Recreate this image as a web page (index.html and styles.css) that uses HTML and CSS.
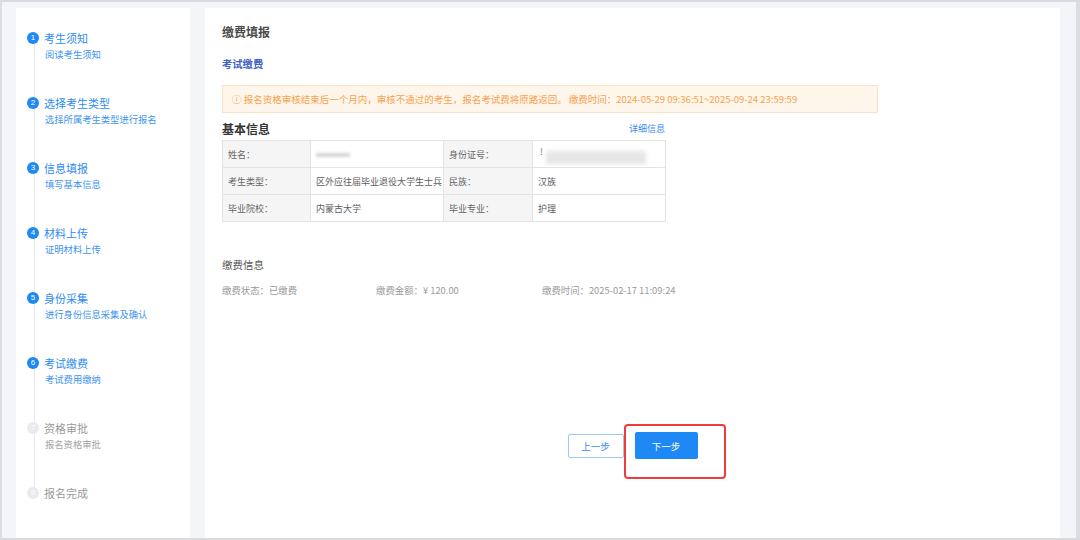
FILE: index.html
```html
<!DOCTYPE html>
<html lang="zh">
<head>
<meta charset="utf-8">
<title>缴费填报</title>
<link rel="stylesheet" href="styles.css">
</head>
<body>
<div class="frame">
  <aside class="sidebar">
    <div class="step done">
      <div class="rail"><span class="dot">1</span><span class="line"></span></div>
      <div class="txt"><div class="st">考生须知</div><div class="sd">阅读考生须知</div></div>
    </div>
    <div class="step done">
      <div class="rail"><span class="dot">2</span><span class="line"></span></div>
      <div class="txt"><div class="st">选择考生类型</div><div class="sd">选择所属考生类型进行报名</div></div>
    </div>
    <div class="step done">
      <div class="rail"><span class="dot">3</span><span class="line"></span></div>
      <div class="txt"><div class="st">信息填报</div><div class="sd">填写基本信息</div></div>
    </div>
    <div class="step done">
      <div class="rail"><span class="dot">4</span><span class="line"></span></div>
      <div class="txt"><div class="st">材料上传</div><div class="sd">证明材料上传</div></div>
    </div>
    <div class="step done">
      <div class="rail"><span class="dot">5</span><span class="line"></span></div>
      <div class="txt"><div class="st">身份采集</div><div class="sd">进行身份信息采集及确认</div></div>
    </div>
    <div class="step done">
      <div class="rail"><span class="dot">6</span><span class="line"></span></div>
      <div class="txt"><div class="st">考试缴费</div><div class="sd">考试费用缴纳</div></div>
    </div>
    <div class="step todo">
      <div class="rail"><span class="dot">7</span><span class="line"></span></div>
      <div class="txt"><div class="st">资格审批</div><div class="sd">报名资格审批</div></div>
    </div>
    <div class="step todo last">
      <div class="rail"><span class="dot">8</span></div>
      <div class="txt"><div class="st">报名完成</div></div>
    </div>
  </aside>

  <main class="main">
    <h1 class="page-title">缴费填报</h1>
    <h2 class="sub-title">考试缴费</h2>
    <div class="alert">ⓘ 报名资格审核结束后一个月内，审核不通过的考生，报名考试费将原路返回。 缴费时间：2024-05-29 09:36:51~2025-09-24 23:59:59</div>

    <div class="info-head">
      <span class="info-title">基本信息</span>
      <span class="info-link">详细信息</span>
    </div>
    <table class="info-table">
      <tr>
        <td class="lb">姓名：</td>
        <td class="val"><span class="blur-name"></span></td>
        <td class="lb">身份证号：</td>
        <td class="val"><span class="id-mark">!</span><span class="blur-id"></span></td>
      </tr>
      <tr>
        <td class="lb">考生类型：</td>
        <td class="val">区外应往届毕业退役大学生士兵</td>
        <td class="lb">民族：</td>
        <td class="val">汉族</td>
      </tr>
      <tr>
        <td class="lb">毕业院校：</td>
        <td class="val">内蒙古大学</td>
        <td class="lb">毕业专业：</td>
        <td class="val">护理</td>
      </tr>
    </table>

    <div class="pay-title">缴费信息</div>
    <div class="pay-row">
      <span>缴费状态：已缴费</span>
      <span>缴费金额：¥ 120.00</span>
      <span>缴费时间：2025-02-17 11:09:24</span>
    </div>

    <div class="actions">
      <button class="btn btn-prev">上一步</button>
      <div class="next-wrap">
        <button class="btn btn-next">下一步</button>
        <span class="highlight"></span>
      </div>
    </div>
  </main>
</div>
</body>
</html>
```
FILE: styles.css
```css
html, body {
  margin: 0;
  padding: 0;
}
body {
  font-family: "Noto Sans CJK SC", "Microsoft YaHei", "Liberation Sans", sans-serif;
  background: #ffffff;
}
.frame {
  width: 1080px;
  height: 540px;
  box-sizing: border-box;
  border-top: 2px solid #d9dadc;
  border-left: 2px solid #dcdde0;
  border-right: 4px solid #dcdde0;
  border-bottom: 2px solid #d9dadc;
  background: #f3f5f9;
  padding: 6px 16px 0 14px;
  display: flex;
  gap: 15px;
}

/* ---------- sidebar ---------- */
.sidebar {
  width: 174px;
  background: #ffffff;
  box-sizing: border-box;
  padding: 24px 0 0 11px;
}
.step {
  display: flex;
  height: 65px;
}
.step.last { height: auto; }
.rail {
  width: 12px;
  display: flex;
  flex-direction: column;
  align-items: center;
}
.dot {
  width: 12px;
  height: 12px;
  border-radius: 50%;
  background: #1e89f4;
  color: #fff;
  font-family: "Liberation Sans", sans-serif;
  font-size: 8px;
  line-height: 12px;
  text-align: center;
  flex: none;
}
.line {
  flex: 1;
  width: 1px;
  background: #e4e7ec;
  margin-left: 3px;
}
.txt {
  margin-left: 5px;
}
.st {
  font-size: 11px;
  line-height: 14px;
  color: #2f8cf0;
  margin-top: -1px;
}
.sd {
  font-size: 9.3px;
  line-height: 12px;
  color: #3d94f0;
  margin-top: 3px;
  margin-left: 1px;
}
.todo .dot {
  background: #e8eaee;
  color: #fff;
}
.todo .st { color: #9a9a9a; }
.todo .sd { color: #a3a3a3; }

/* ---------- main ---------- */
.main {
  flex: 1;
  background: #ffffff;
  box-sizing: border-box;
  padding: 16px 0 0 17px;
  display: flex;
  flex-direction: column;
  align-items: flex-start;
}
.page-title {
  margin: 0;
  font-size: 12px;
  line-height: 16px;
  font-weight: 700;
  color: #4a4a4a;
}
.sub-title {
  margin: 17px 0 0;
  font-size: 10.3px;
  line-height: 14px;
  font-weight: 700;
  color: #3f5fc9;
}
.alert {
  margin-top: 14px;
  width: 656px;
  height: 28px;
  box-sizing: border-box;
  background: #fff6eb;
  border: 1px solid #fbe2c5;
  color: #f5a250;
  font-size: 9.5px;
  line-height: 26px;
  padding-left: 9px;
  white-space: nowrap;
}
.info-head {
  margin-top: 7px;
  width: 443px;
  display: flex;
  justify-content: space-between;
  align-items: center;
  height: 16px;
}
.info-title {
  font-size: 12px;
  font-weight: 700;
  color: #333;
}
.info-link {
  font-size: 9px;
  color: #3d8bf0;
}
.info-table {
  margin-top: 4px;
  border-collapse: collapse;
  width: 443px;
  table-layout: fixed;
  font-size: 9px;
  color: #5c5c5c;
}
.info-table td {
  border: 1px solid #e3e3e3;
  height: 27px;
  padding: 0 0 0 5px;
  box-sizing: border-box;
  white-space: nowrap;
  overflow: hidden;
}
.info-table td:nth-child(1) { width: 88px; }
.info-table td:nth-child(2) { width: 133px; }
.info-table td:nth-child(3) { width: 89px; }
.info-table td:nth-child(4) { width: 133px; }
.info-table .lb {
  background: #f5f5f5;
  color: #666;
}
.blur-name {
  display: inline-block;
  width: 34px;
  height: 4px;
  background: #d4d4d4;
  filter: blur(1.5px);
  vertical-align: middle;
}
.id-mark {
  color: #777;
  margin-left: 2px;
}
.blur-id {
  display: inline-block;
  width: 100px;
  height: 13px;
  background: #e6e6e6;
  filter: blur(2px);
  vertical-align: -9px;
  margin-left: 3px;
}
.pay-title {
  margin-top: 36px;
  font-size: 10.5px;
  line-height: 14px;
  color: #555;
}
.pay-row {
  margin-top: 11px;
  display: grid;
  grid-template-columns: 154px 166px auto;
  font-size: 9.4px;
  line-height: 14px;
  color: #9a9a9a;
}
.actions {
  align-self: center;
  margin-top: 135px;
  margin-left: -17px;
  display: flex;
  align-items: center;
  gap: 11px;
}
.btn {
  font-family: "Noto Sans CJK SC", "Liberation Sans", sans-serif;
  font-size: 9.5px;
  border-radius: 2px;
  cursor: pointer;
  padding: 0;
}
.btn-prev {
  width: 56px;
  height: 24px;
  background: #fff;
  border: 1px solid #9cc8f6;
  color: #3a8ef0;
}
.btn-next {
  width: 63px;
  height: 27px;
  background: #1e89f4;
  border: none;
  color: #fff;
  display: block;
}
.next-wrap {
  position: relative;
}
.highlight {
  position: absolute;
  left: -11px;
  top: -8px;
  width: 102px;
  height: 55px;
  box-sizing: border-box;
  border: 2px solid #ef3b3b;
  border-radius: 4px;
}
```
